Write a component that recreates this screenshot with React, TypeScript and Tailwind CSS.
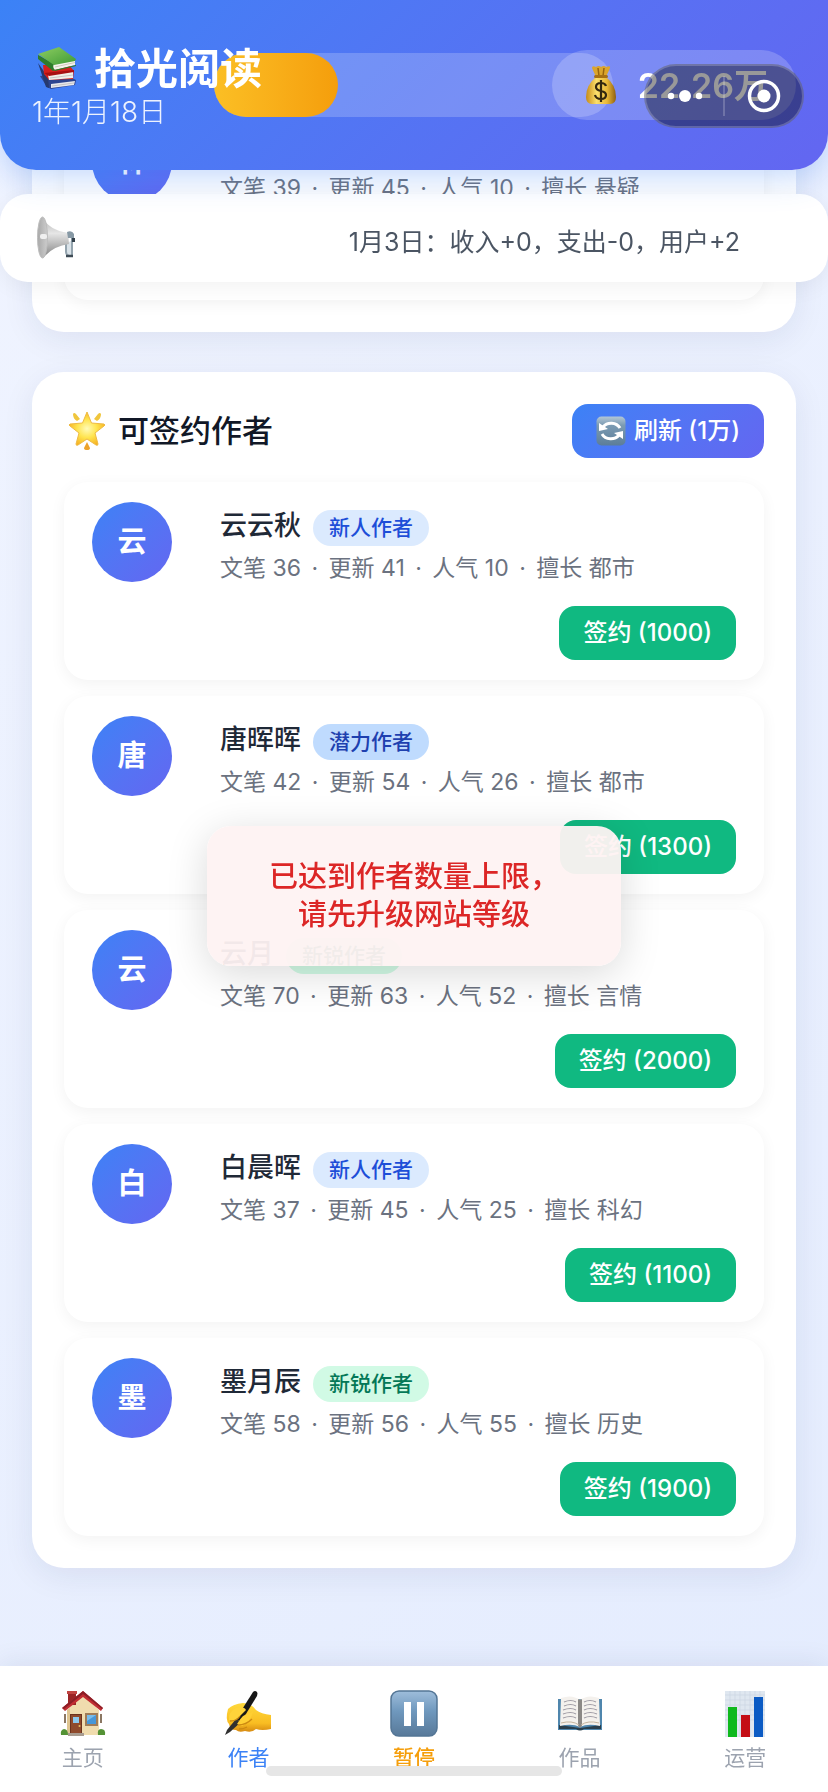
import type { ReactNode } from 'react'

interface Author {
  name: string
  level?: string
  stats: [number, number, number]
  genre: string
  price?: number
}

interface NavItem {
  label: string
  icon: ReactNode
  color: string
}

const candidates: Author[] = [
  { name: '云云秋', level: '新人作者', stats: [36, 41, 10], genre: '都市', price: 1000 },
  { name: '唐晖晖', level: '潜力作者', stats: [42, 54, 26], genre: '都市', price: 1300 },
  { name: '云月', level: '新锐作者', stats: [70, 63, 52], genre: '言情', price: 2000 },
  { name: '白晨晖', level: '新人作者', stats: [37, 45, 25], genre: '科幻', price: 1100 },
  { name: '墨月辰', level: '新锐作者', stats: [58, 56, 55], genre: '历史', price: 1900 },
]

const levelStyles: Record<string, string> = {
  新人作者: 'bg-[#dbeafe] text-[#1d4ed8]',
  潜力作者: 'bg-[#bfdbfe] text-[#1e40af]',
  新锐作者: 'bg-[#d1fae5] text-[#047857]',
}

function BooksIcon() {
  return (
    <svg width="42" height="42" viewBox="0 0 42 42" aria-hidden="true">
      <defs>
        <linearGradient id="bookGreen" x1="0" y1="0" x2="1" y2="1">
          <stop offset="0" stopColor="#8fce62" />
          <stop offset="1" stopColor="#3d9a35" />
        </linearGradient>
      </defs>
      <path d="M4 29 L28 27 L40 33 L39 38 L15 42 L11 40Z" fill="#2c4590" />
      <path d="M15 37 L39 34 L38 38 L15 41Z" fill="#e6e8ee" />
      <path d="M2 16 L10 40 L13 41 L12 30Z" fill="#25396f" />
      <path d="M7 18 L33 18 L38 24 L37 32 L13 33 L8 27Z" fill="#d51f1c" />
      <path d="M12 28 L37 24 L37 31 L13 33Z" fill="#f1efe9" />
      <path d="M8 26 L38 23 L38 25 L13 29Z" fill="#a80f12" />
      <path d="M2 8 L2 12 L17 24 L19 23 L20 18Z" fill="#2d7c2b" />
      <path d="M18 17 L39 13 L39 18 L19 23 Q16 20 18 17Z" fill="#f5f3ec" />
      <path d="M2 7 L23 0 L40 12 L39 14 L18 18Z" fill="url(#bookGreen)" />
      <path d="M18 23 L40 18 L40 19 L19 24Z" fill="#2d7c2b" />
      <path d="M19 20 L39 15.500" stroke="#cfcabb" strokeWidth="1" />
      <path d="M14 31 L37 28 M16 39 L38 36" stroke="#c7c5c2" strokeWidth="1" />
    </svg>
  )
}

function MoneyBagIcon() {
  return (
    <svg width="34" height="40" viewBox="0 0 34 40" aria-hidden="true">
      <defs>
        <linearGradient id="bag" x1="0" y1="0" x2="1" y2="0">
          <stop offset="0" stopColor="#c58a18" />
          <stop offset="0.350" stopColor="#fbdf6c" />
          <stop offset="0.700" stopColor="#e9b838" />
          <stop offset="1" stopColor="#8f5f10" />
        </linearGradient>
      </defs>
      <path d="M12 12 L8 3 Q8 0 12 2 Q15 0 17 2 Q20 0 22 2 Q27 0 26 3 L22 12Z" fill="#dba52c" />
      <path d="M14 3 L15 11 M20 3 L19 11" stroke="#956410" strokeWidth="1.500" />
      <path d="M12 12 H22 Q32 20 32 32 Q32 39 26 39 H8 Q2 39 2 32 Q2 20 12 12Z" fill="url(#bag)" />
      <rect x="10" y="10" width="14" height="3" rx="1.500" fill="#a67014" />
      <path
        d="M22 21 Q21 18 17 18 Q12 18 12 22 Q12 25 17 26 Q22 27 22 30 Q22 34 17 34 Q12 34 11 30 M17 15 V37"
        fill="none"
        stroke="#33270f"
        strokeWidth="2.200"
      />
    </svg>
  )
}

function MegaphoneIcon() {
  return (
    <svg width="42" height="44" viewBox="0 0 42 44" aria-hidden="true">
      <defs>
        <linearGradient id="horn" x1="0" y1="0" x2="0" y2="1">
          <stop offset="0" stopColor="#b2b2b2" />
          <stop offset="0.400" stopColor="#e6e6e6" />
          <stop offset="1" stopColor="#808080" />
        </linearGradient>
        <linearGradient id="hornMouth" x1="0" y1="0" x2="1" y2="0">
          <stop offset="0" stopColor="#a8a8a8" />
          <stop offset="1" stopColor="#cdcdcd" />
        </linearGradient>
      </defs>
      <path d="M30 28 V36 Q30 39 33 40 H36 V24" fill="#d9e2e8" stroke="#94a4ae" strokeWidth="2" />
      <path d="M30 40 H37" stroke="#3f4c56" strokeWidth="2.500" />
      <path d="M6 1 Q13 14 32 17 L33 28 Q17 30 7 42Z" fill="url(#horn)" />
      <ellipse cx="6.500" cy="21.500" rx="5" ry="20.500" fill="url(#hornMouth)" stroke="#bdbdbd" />
      <rect x="4" y="18" width="7" height="5" rx="2" fill="#f0f0f0" />
      <path d="M31 16 Q36 14 38 18 V26 H35 V22 H32Z" fill="#8799a5" />
      <path d="M36 22 H39 V26 H36Z" fill="#33404a" />
    </svg>
  )
}

function StarIcon() {
  return (
    <svg width="38" height="40" viewBox="0 0 38 40" aria-hidden="true">
      <defs>
        <radialGradient id="star" cx="0.500" cy="0.500" r="0.550">
          <stop offset="0" stopColor="#fffbb8" />
          <stop offset="0.500" stopColor="#ffe44e" />
          <stop offset="1" stopColor="#f6ae20" />
        </radialGradient>
      </defs>
      <path d="M5 3 Q6 1 8 3 L12 8 L9 10 Q5 8 5 3Z M33 3 Q32 1 30 3 L26 8 L29 10 Q33 8 33 3Z" fill="#f0c63d" />
      <path d="M19 31 L22 37 Q22 39 19 39 Q16 39 16 37Z" fill="#eda32c" />
      <path
        d="M19 1 L23.500 12 L36 13 Q38 14 36 15 L27 22 L30 33 Q30 35 28 34 L19 28 L10 34 Q8 35 8 33 L11 22 L2 15 Q0 14 2 13 L14.500 12Z"
        fill="url(#star)"
        stroke="#eebb45"
        strokeWidth="1"
        strokeLinejoin="round"
      />
    </svg>
  )
}

function RefreshIcon() {
  return (
    <svg width="30" height="30" viewBox="0 0 30 30" aria-hidden="true">
      <defs>
        <linearGradient id="refreshTile" x1="0" y1="0" x2="0" y2="1">
          <stop offset="0" stopColor="#b3c7d6" />
          <stop offset="0.300" stopColor="#7b9bb3" />
          <stop offset="1" stopColor="#5c7d99" />
        </linearGradient>
      </defs>
      <rect x="0.500" y="0.500" width="29" height="29" rx="5" fill="url(#refreshTile)" />
      <path d="M7 11 A10 9 0 0 1 24 12 M23 19 A10 9 0 0 1 6 18" fill="none" stroke="#fff" strokeWidth="3" />
      <path d="M3 7 V15 L12 13Z M27 23 V15 L18 17Z" fill="#fff" />
    </svg>
  )
}

function HouseIcon() {
  return (
    <svg width="48" height="48" viewBox="0 0 48 48" aria-hidden="true">
      <path d="M8 20 L24 5 L40 20 V45 H8Z" fill="#f0dcae" />
      <path d="M8 20 V45 H11 V18Z" fill="#dfc591" />
      <rect x="9" y="2" width="8" height="13" fill="#9b2527" />
      <rect x="8" y="1" width="10" height="3" fill="#c04442" />
      <path d="M24 1 L44 18 L42 21 L24 7 L6 21 L3 18Z" fill="#c12d32" />
      <path d="M24 1 L44 18 L43 19 L24 4 L5 19 L3 18Z" fill="#8d1e26" />
      <rect x="11" y="24" width="12" height="20" fill="#6c321d" />
      <rect x="12" y="25" width="10" height="18" fill="#8f4a2c" />
      <rect x="14" y="27" width="6" height="6" fill="#8dc8ec" />
      <circle cx="20.500" cy="36" r="1" fill="#e8c263" />
      <rect x="26" y="23" width="13" height="13" fill="#9f7c58" />
      <rect x="28" y="25" width="9" height="9" fill="#4797d8" />
      <path d="M28 25 H37 L28 31Z" fill="#79bdeb" />
      <path d="M6 24 V33 M42 24 V33" stroke="#8b7763" strokeWidth="2" />
      <rect x="9" y="43" width="16" height="3" fill="#a89c90" />
      <path d="M2 45 Q1 40 5 39 Q9 39 9 45Z M39 45 Q38 39 42 39 Q47 39 46 45Z" fill="#549235" />
    </svg>
  )
}

function WritingHandIcon() {
  return (
    <svg width="48" height="48" viewBox="0 0 48 48" aria-hidden="true">
      <defs>
        <linearGradient id="hand" x1="0" y1="0" x2="0" y2="1">
          <stop offset="0" stopColor="#ffd93c" />
          <stop offset="0.700" stopColor="#f9bd22" />
          <stop offset="1" stopColor="#d68a12" />
        </linearGradient>
      </defs>
      <path
        d="M5 34 Q1 30 4 19 Q9 14 19 13 Q27 13 32 20 Q37 24 47 25 V39 Q38 41 32 39 Q28 43 21 41 Q15 43 12 40 Q6 40 5 34Z"
        fill="url(#hand)"
      />
      <path d="M29 2 Q31 0 33 2 Q34 3 33 6 L17 32 L12 29Z" fill="#171717" />
      <path d="M12 29 L3 40 L1 45 L6 42 L17 32Z" fill="#303030" />
      <path d="M5 30 Q4 22 12 18 Q20 16 22 20 L15 27 Q10 32 5 30Z" fill="#ffd43a" />
      <path d="M13 34 Q19 23 29 22 Q26 32 18 36Z" fill="#ffcf33" />
      <path d="M6 31 Q13 31 16 26 M14 35 Q22 35 28 29 M15 39 Q20 39 23 37" fill="none" stroke="#cd8a12" strokeWidth="1.300" />
    </svg>
  )
}

function PauseIcon() {
  return (
    <svg width="48" height="48" viewBox="0 0 48 48" aria-hidden="true">
      <defs>
        <linearGradient id="pauseTile" x1="0" y1="0" x2="0" y2="1">
          <stop offset="0" stopColor="#9ebddb" />
          <stop offset="0.450" stopColor="#6f98bd" />
          <stop offset="1" stopColor="#587999" />
        </linearGradient>
      </defs>
      <rect x="1" y="1" width="46" height="45" rx="8" fill="url(#pauseTile)" stroke="#537595" strokeWidth="1.500" />
      <rect x="14" y="12" width="7" height="24" fill="#fff" />
      <rect x="27" y="12" width="7" height="24" fill="#fff" />
    </svg>
  )
}

function OpenBookIcon() {
  return (
    <svg width="48" height="48" viewBox="0 0 48 48" aria-hidden="true">
      <path d="M2 9 H46 V40 H2Z" fill="#4f86ad" />
      <path d="M3 35 L24 38 L45 35 V39 H28 Q24 42 20 39 H3Z" fill="#2b3f4c" />
      <path d="M5 8 Q16 4 24 10 Q32 4 43 8 L44 36 Q32 33 24 37 Q16 33 4 36Z" fill="#f4f1ed" />
      <path d="M22 9 L24 10 L26 9 V36 L24 38 L22 36Z" fill="#8b8885" />
      <path
        d="M8 12 Q15 9 20 12 M8 16 Q15 13 20 16 M7 20 Q15 17 20 20 M7 24 Q15 21 20 24 M7 28 Q15 25 20 28 M28 12 Q34 9 40 12 M28 16 Q34 13 40 16 M28 20 Q34 17 41 20 M28 24 Q34 21 41 24 M28 28 Q34 25 41 28"
        fill="none"
        stroke="#a09ca5"
        strokeWidth="1.200"
      />
      <path d="M5 33 Q16 30 23 35 M43 33 Q32 30 25 35" fill="none" stroke="#c4b49e" />
    </svg>
  )
}

function ChartIcon() {
  return (
    <svg width="48" height="48" viewBox="0 0 48 48" aria-hidden="true">
      <rect x="4" y="1" width="40" height="46" fill="#dfe7f0" />
      <path
        d="M4 5 H44 M4 10 H44 M4 15 H44 M4 20 H44 M4 25 H44 M4 30 H44 M9 1 V47 M14 1 V47 M19 1 V47 M24 1 V47 M29 1 V47 M34 1 V47 M39 1 V47"
        stroke="#cbd6e2"
        strokeWidth="0.700"
      />
      <rect x="7" y="17" width="9" height="30" fill="#0fb91d" />
      <rect x="20" y="25" width="9" height="22" fill="#c40d15" />
      <rect x="33" y="7" width="9" height="40" fill="#0b5bc4" />
    </svg>
  )
}

const navItems: NavItem[] = [
  { label: '主页', icon: <HouseIcon />, color: 'text-[#9ca3af]' },
  { label: '作者', icon: <WritingHandIcon />, color: 'text-[#3b82f6]' },
  { label: '暂停', icon: <PauseIcon />, color: 'text-[#f59e0b] font-medium' },
  { label: '作品', icon: <OpenBookIcon />, color: 'text-[#9ca3af]' },
  { label: '运营', icon: <ChartIcon />, color: 'text-[#9ca3af]' },
]

function Dot() {
  return <span className="mx-1">·</span>
}

function AuthorCard({ author }: { author: Author }) {
  const [writing, update, fame] = author.stats
  return (
    <article className="flex gap-12 rounded-3xl bg-white px-7 py-5 shadow-[0_4px_16px_rgba(0,0,0,0.05)]">
      <div className="flex size-20 shrink-0 items-center justify-center rounded-full bg-linear-135 from-[#3b82f6] to-[#6366f1] text-[29px] font-semibold text-white">
        {author.name[0]}
      </div>
      <div className="flex min-h-[158px] min-w-0 flex-1 flex-col">
        <div className="flex h-12 items-start gap-3 pt-2">
          <h3 className="text-[27px] leading-8 font-medium text-[#1f2937]">{author.name}</h3>
          {author.level && (
            <span className={`h-9 rounded-full px-4 text-[21px] leading-9 font-medium ${levelStyles[author.level]}`}>
              {author.level}
            </span>
          )}
        </div>
        <p className="text-[23px] leading-9 whitespace-nowrap text-[#6b7280]">
          文笔 {writing} <Dot /> 更新 {update} <Dot /> 人气 {fame} <Dot /> 擅长 {author.genre}
        </p>
        {author.price && (
          <button
            type="button"
            className="mt-5 h-[54px] self-end rounded-2xl bg-[#10b981] px-6 text-[24px] font-medium text-white"
          >
            签约 ({author.price})
          </button>
        )}
      </div>
    </article>
  )
}

function Header() {
  return (
    <header className="fixed inset-x-0 top-0 z-20 flex h-[170px] items-start justify-between rounded-b-[36px] bg-linear-135 from-[#3b82f6] to-[#6366f1] px-8 text-white shadow-[0_8px_32px_rgba(59,130,246,0.3)]">
      {/* level progress runs behind the title and the balance */}
      <div className="absolute top-[53px] right-[215px] left-[214px] h-16 rounded-full bg-white/20">
        <div className="h-full w-[31%] rounded-full bg-linear-to-r from-[#fbbf24] to-[#f59e0b]" />
      </div>
      <div className="relative pt-11">
        <h1 className="flex h-12 items-center gap-4 pl-1 text-[42px] font-bold">
          <BooksIcon />
          拾光阅读
        </h1>
        <p className="text-[28px] leading-10 font-light text-white/90">1年1月18日</p>
      </div>
      <div className="relative mt-[50px] flex h-[70px] items-center gap-5 rounded-full bg-white/20 pr-7 pl-8 text-[34px] font-semibold">
        <MoneyBagIcon />
        <span>22.26万</span>
      </div>
      <div className="absolute top-16 right-6 flex h-16 w-40 items-center rounded-full border-2 border-white/20 bg-black/40">
        <button type="button" aria-label="更多" className="flex h-full flex-1 items-center justify-center">
          <svg width="36" height="14" viewBox="0 0 36 14" fill="#fff" aria-hidden="true">
            <circle cx="4" cy="7" r="3.200" />
            <circle cx="18" cy="7" r="6" />
            <circle cx="32" cy="7" r="3.200" />
          </svg>
        </button>
        <span className="h-10 w-0.5 bg-white/20" />
        <button type="button" aria-label="关闭" className="flex h-full flex-1 items-center justify-center">
          <svg width="34" height="34" viewBox="0 0 34 34" aria-hidden="true">
            <circle cx="17" cy="17" r="14.500" fill="none" stroke="#fff" strokeWidth="3.500" />
            <circle cx="17" cy="17" r="6.500" fill="#fff" />
          </svg>
        </button>
      </div>
    </header>
  )
}

export default function App() {
  return (
    <div className="min-h-screen bg-linear-135 from-[#f0f4ff] to-[#e4ecfe] font-[Inter,'Noto_Sans_CJK_SC',sans-serif]">
      <Header />

      <div className="fixed inset-x-0 top-[194px] z-10 flex h-[88px] items-end justify-between rounded-[28px] bg-white pr-[88px] pb-[22px] pl-9 shadow-[0_4px_24px_rgba(0,0,0,0.06)]">
        <MegaphoneIcon />
        <p className="text-[25px] leading-9 text-[#4b5563]">1月3日：收入+0，支出-0，用户+2</p>
      </div>

      <main className="flex flex-col gap-10 px-8 pt-[70px] pb-[224px]">
        <section className="rounded-[32px] bg-white p-8 shadow-[0_8px_32px_rgba(31,41,90,0.08)]">
          <AuthorCard author={{ name: '林', stats: [39, 45, 10], genre: '悬疑' }} />
        </section>

        <section className="rounded-[32px] bg-white p-8 shadow-[0_8px_32px_rgba(31,41,90,0.08)]">
          <div className="mb-6 flex items-center justify-between">
            <h2 className="flex items-center gap-3 pl-1 text-[31px] leading-[54px] font-medium text-[#111827]">
              <StarIcon />
              可签约作者
            </h2>
            <button
              type="button"
              className="flex h-[54px] items-center gap-2 rounded-2xl bg-linear-135 from-[#3b82f6] to-[#6366f1] px-6 text-[24px] font-medium text-white"
            >
              <RefreshIcon />
              刷新 (1万)
            </button>
          </div>
          <div className="flex flex-col gap-4">
            {candidates.map((author) => (
              <AuthorCard key={author.name} author={author} />
            ))}
          </div>
        </section>
      </main>

      <div
        role="alert"
        className="fixed top-1/2 left-1/2 z-30 w-1/2 -translate-x-1/2 -translate-y-1/2 rounded-3xl bg-[#fef2f2]/95 py-8 text-center text-[29px] leading-[38px] font-medium text-[#dc2626] shadow-[0_8px_40px_rgba(0,0,0,0.15)]"
      >
        已达到作者数量上限，
        <br />
        请先升级网站等级
      </div>

      <nav className="fixed inset-x-0 bottom-0 z-20 flex h-[126px] bg-white pt-6 shadow-[0_-4px_24px_rgba(31,41,90,0.08)]">
        {navItems.map((item) => (
          <button
            key={item.label}
            type="button"
            className={`flex flex-1 flex-col items-center text-[21px] leading-8 ${item.color}`}
          >
            {item.icon}
            <span className="mt-1">{item.label}</span>
          </button>
        ))}
        <div className="absolute bottom-4 left-1/2 h-2.5 w-[296px] -translate-x-1/2 rounded-full bg-[#e6e6e6]" />
      </nav>
    </div>
  )
}
